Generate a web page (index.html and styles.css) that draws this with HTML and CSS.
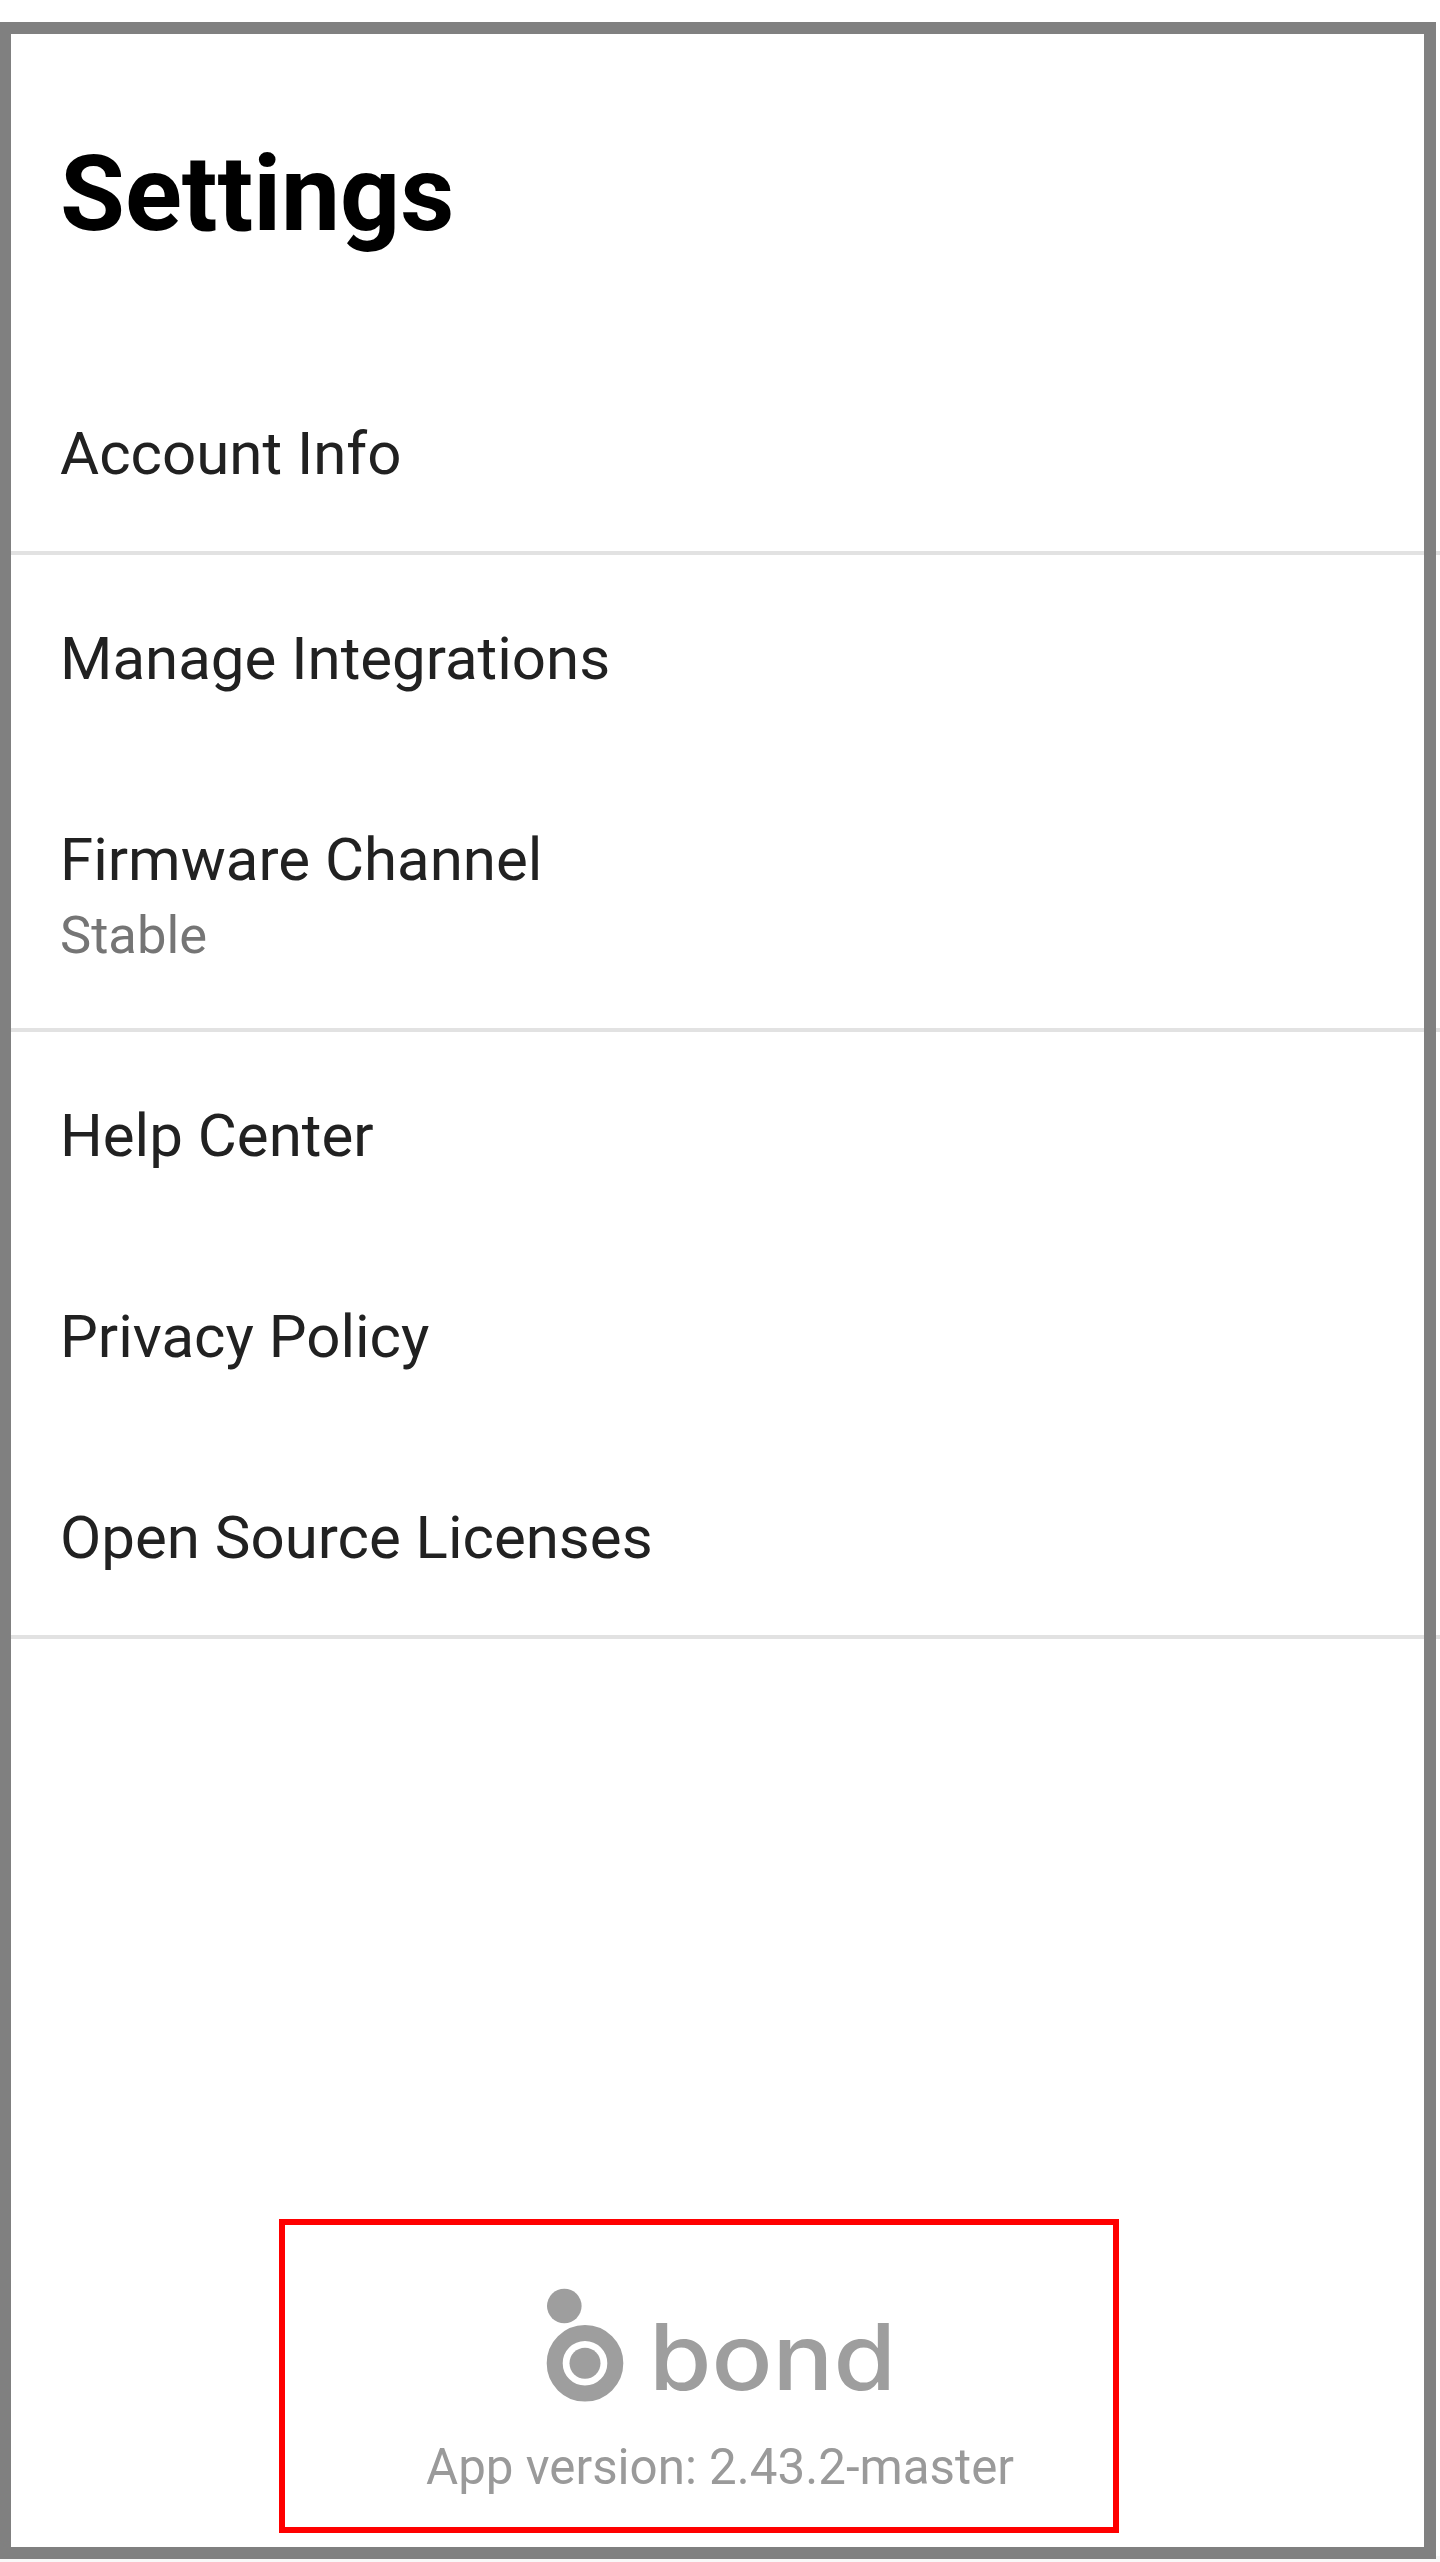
FILE: index.html
```html
<!DOCTYPE html>
<html>

<head>
    <meta charset="UTF-8" />
    <title>
        Settings
    </title>
    <link rel="stylesheet" href="styles.css">
</head>

<body>
    <div class="screen">
        <h1 class="title">Settings</h1>

        <div class="group">
            <div class="row"><div class="rowLabel">Account Info</div></div>
        </div>

        <div class="group">
            <div class="row"><div class="rowLabel">Manage Integrations</div></div>
            <div class="row rowTwoLine">
                <div class="rowLabel">Firmware Channel</div>
                <div class="rowValue">Stable</div>
            </div>
        </div>

        <div class="group">
            <div class="row"><div class="rowLabel">Help Center</div></div>
            <div class="row"><div class="rowLabel">Privacy Policy</div></div>
            <div class="row"><div class="rowLabel">Open Source Licenses</div></div>
        </div>

        <div class="footer">
            <svg class="logo" width="400" height="150" viewBox="0 0 400 150">
                <circle cx="44.3" cy="36" r="17.3" fill="#9e9e9e" />
                <circle cx="65" cy="93.3" r="30.3" fill="none" stroke="#9e9e9e" stroke-width="16" />
                <circle cx="65" cy="93.3" r="15.5" fill="#9e9e9e" />
                <text class="logoText" x="129" y="120" textLength="247" lengthAdjust="spacingAndGlyphs">bond</text>
            </svg>
            <div class="version">App version: 2.43.2-master</div>
        </div>
        <div class="bottomStrip"></div>
    </div>

    <div class="frame"></div>
    <div class="highlight"></div>
</body>

</html>
```

FILE: styles.css
```css
html, body {
    margin: 0;
    padding: 0;
    background-color: white;
}

.screen {
    width: 1440px;
    height: 2562px;
    display: flex;
    flex-direction: column;
    font-family: Roboto, sans-serif;
    overflow: hidden;
}

.title {
    margin: 0;
    padding: 138px 60px 0 60px;
    height: 350px;
    box-sizing: border-box;
    font-size: 105.4px;
    line-height: 112px;
    font-weight: 700;
    color: black;
}

.group {
    border-bottom: 4px solid #e2e2e2;
}

.row {
    padding: 66px 60px 59px 60px;
}

.rowTwoLine {
    padding-bottom: 56px;
}

.rowLabel {
    font-size: 60px;
    line-height: 76px;
    color: #212121;
}

.rowValue {
    font-size: 52.5px;
    line-height: 74px;
    color: #757575;
}

.footer {
    margin-top: auto;
    display: flex;
    flex-direction: column;
    align-items: center;
    padding-bottom: 60px;
}

.logo {
    display: block;
    margin-bottom: 18px;
}

.logoText {
    font-family: Inter, sans-serif;
    font-size: 92px;
    font-weight: 550;
    fill: #9e9e9e;
}

.version {
    font-size: 49.3px;
    line-height: 58px;
    color: #9a9a9a;
}

.bottomStrip {
    height: 6px;
    background-color: #f8f8f8;
}

/* annotation boxes on top of the screen */
.frame {
    position: absolute;
    left: -1px;
    top: 22px;
    width: 1437px;
    height: 2537px;
    box-sizing: border-box;
    border: 12px solid #808080;
}

.highlight {
    position: absolute;
    left: 279px;
    top: 2219px;
    width: 840px;
    height: 314px;
    box-sizing: border-box;
    border: 6px solid red;
}
```
